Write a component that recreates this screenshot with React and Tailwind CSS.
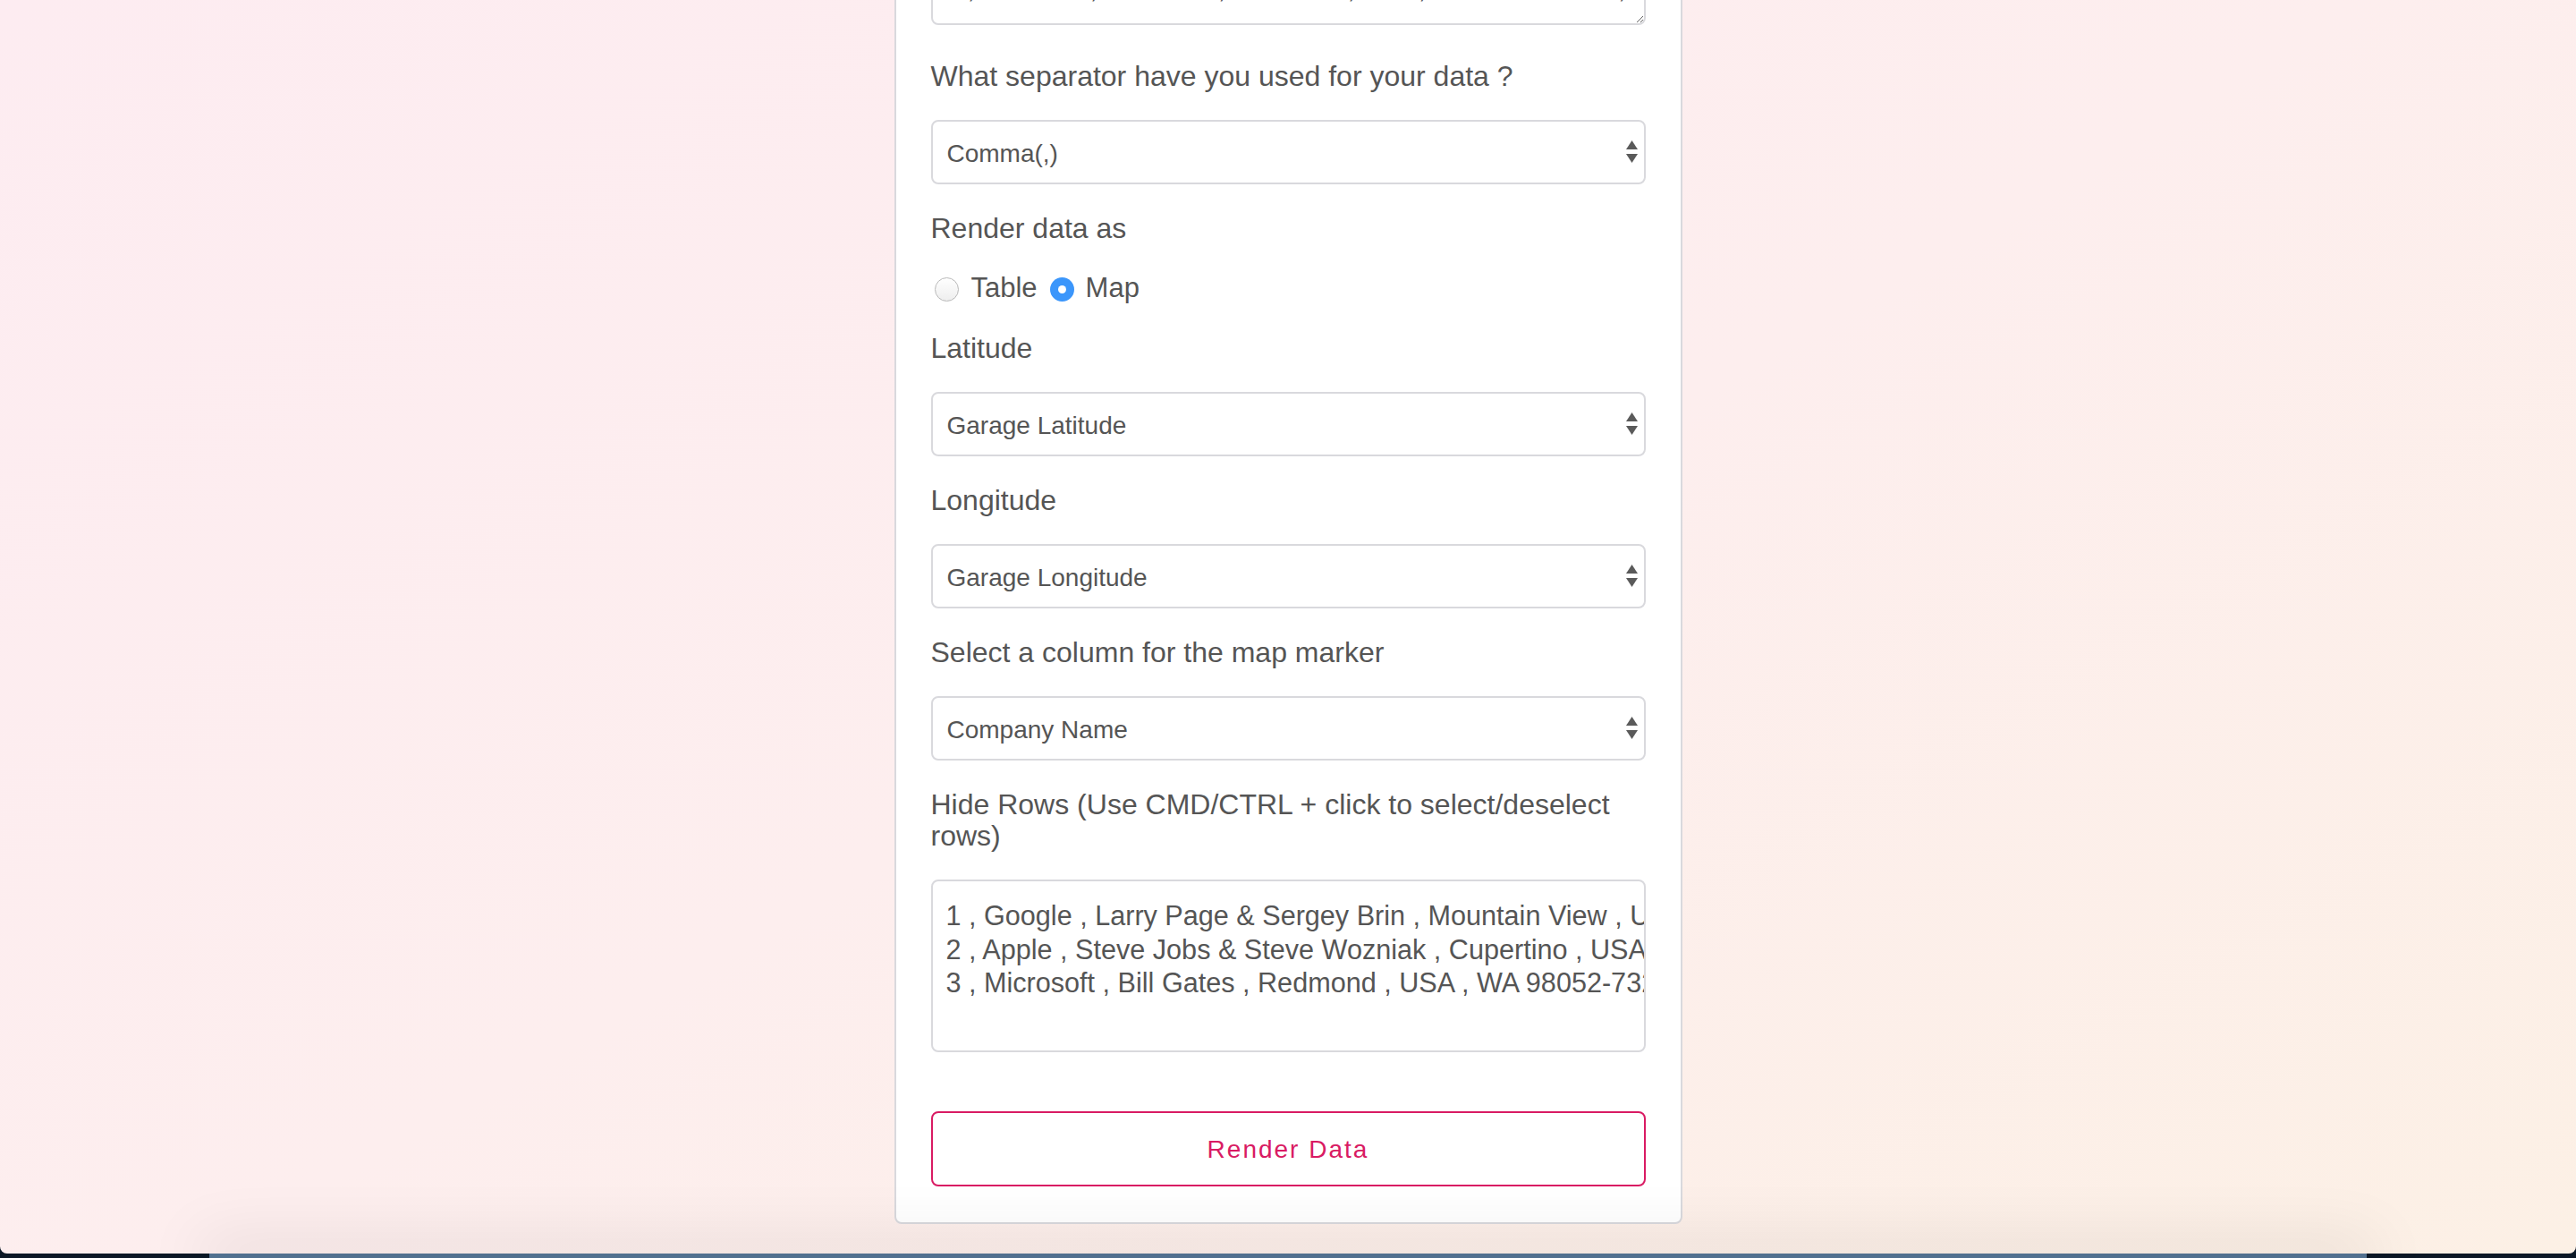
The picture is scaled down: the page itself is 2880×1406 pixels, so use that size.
import React from "react";

function SelectBox({ value }) {
  return (
    <div className="mb-[30px] flex h-[72px] items-center justify-between rounded-[8px] border-2 border-[#d9d9dd] bg-white pl-[16px] pr-[7px] pt-[3px] text-[28px] text-[#555]">
      <span>{value}</span>
      <svg width="13" height="26" viewBox="0 0 13 26" className="-mt-[3px] shrink-0">
        <polygon points="0,10 6.5,0 13,10" fill="#5a5a5a" />
        <polygon points="0,15 6.5,25 13,15" fill="#5a5a5a" />
      </svg>
    </div>
  );
}

function Label({ children }) {
  return <div className="mb-[31px] pt-[2px] text-[32px] leading-[35px] text-[#555]">{children}</div>;
}

export default function App() {
  const csv = [
    "S.No , Company Name , Founders , City , Country , Postal Code , Garage Latitude , Garage Longitude",
    "1 , Google , Larry Page & Sergey Brin , Mountain View , USA , CA 94043 , 37.4572 , -122.1630",
    "2 , Apple , Steve Jobs & Steve Wozniak , Cupertino , USA , CA 95014 , 37.3382 , -122.0922",
    "3 , Microsoft , Bill Gates , Redmond , USA , WA 98052-7329 , 47.6740 , -122.1215",
  ].join("\n");

  const rows = [
    "1 , Google , Larry Page & Sergey Brin , Mountain View , USA , CA 94043 , 37.4572 , -122.1630",
    "2 , Apple , Steve Jobs & Steve Wozniak , Cupertino , USA , CA 95014 , 37.3382 , -122.0922",
    "3 , Microsoft , Bill Gates , Redmond , USA , WA 98052-7329 , 47.6740 , -122.1215",
  ];

  return (
    <div className="flex h-[1406px] w-[2880px] flex-col overflow-hidden bg-[#0c1826] font-['Liberation_Sans',Arial,Helvetica,sans-serif]">
      <div className="relative h-[1401px] shrink-0 overflow-hidden rounded-b-[8px] bg-[linear-gradient(150deg,#fdecf1_0%,#fdeeee_50%,#fcf0e5_100%)]">
        <div className="mx-auto -mt-[206px] w-[881px] rounded-b-[8px] border-2 border-[#d9d9dd] bg-white px-[39px] pt-[39px] pb-[40px]">
          <textarea
            readOnly
            wrap="off"
            defaultValue={csv}
            className="mb-[38px] block h-[193px] w-full resize-y overflow-hidden whitespace-pre rounded-[8px] border-2 border-[#d9d9dd] bg-white px-[16px] pt-[12px] pb-[17px] text-[28px] leading-[40px] text-[#555] outline-none"
          />

          <Label>What separator have you used for your data ?</Label>
          <SelectBox value="Comma(,)" />

          <Label>Render data as</Label>
          <div className="mb-[31px] flex h-[35px] items-center text-[31px] text-[#555]">
            <span className="ml-[4px] mt-[4px] h-[27px] w-[27px] shrink-0 rounded-full border border-[#b8b8b8] bg-[linear-gradient(#ffffff,#eeeeee)]" />
            <span className="ml-[14px] mt-[2px]">Table</span>
            <span className="ml-[14px] mt-[4px] flex h-[27px] w-[27px] shrink-0 items-center justify-center rounded-full bg-[#3b96fb]">
              <span className="h-[9px] w-[9px] rounded-full bg-white" />
            </span>
            <span className="ml-[13px] mt-[2px]">Map</span>
          </div>

          <Label>Latitude</Label>
          <SelectBox value="Garage Latitude" />

          <Label>Longitude</Label>
          <SelectBox value="Garage Longitude" />

          <Label>Select a column for the map marker</Label>
          <SelectBox value="Company Name" />

          <Label>Hide Rows (Use CMD/CTRL + click to select/deselect rows)</Label>
          <div className="h-[193px] overflow-hidden rounded-[8px] border-2 border-[#d9d9dd] bg-white pl-[15px] pt-[20px] text-[30.6px] leading-[37.5px] text-[#555]">
            {rows.map((r) => (
              <div key={r} className="whitespace-nowrap">{r}</div>
            ))}
          </div>

          <button className="mt-[66px] block h-[84px] w-full rounded-[8px] border-2 border-[#d91b63] bg-white pt-[2px] text-[28px] tracking-[2px] text-[#d91b63]">
            Render Data
          </button>
        </div>
      </div>
      <div className="flex h-[5px] shrink-0">
        <div className="relative z-10 mx-[234px] h-full flex-1 bg-[#51708f] shadow-[0_0_70px_10px_rgba(0,0,0,0.14)]" />
      </div>
    </div>
  );
}
